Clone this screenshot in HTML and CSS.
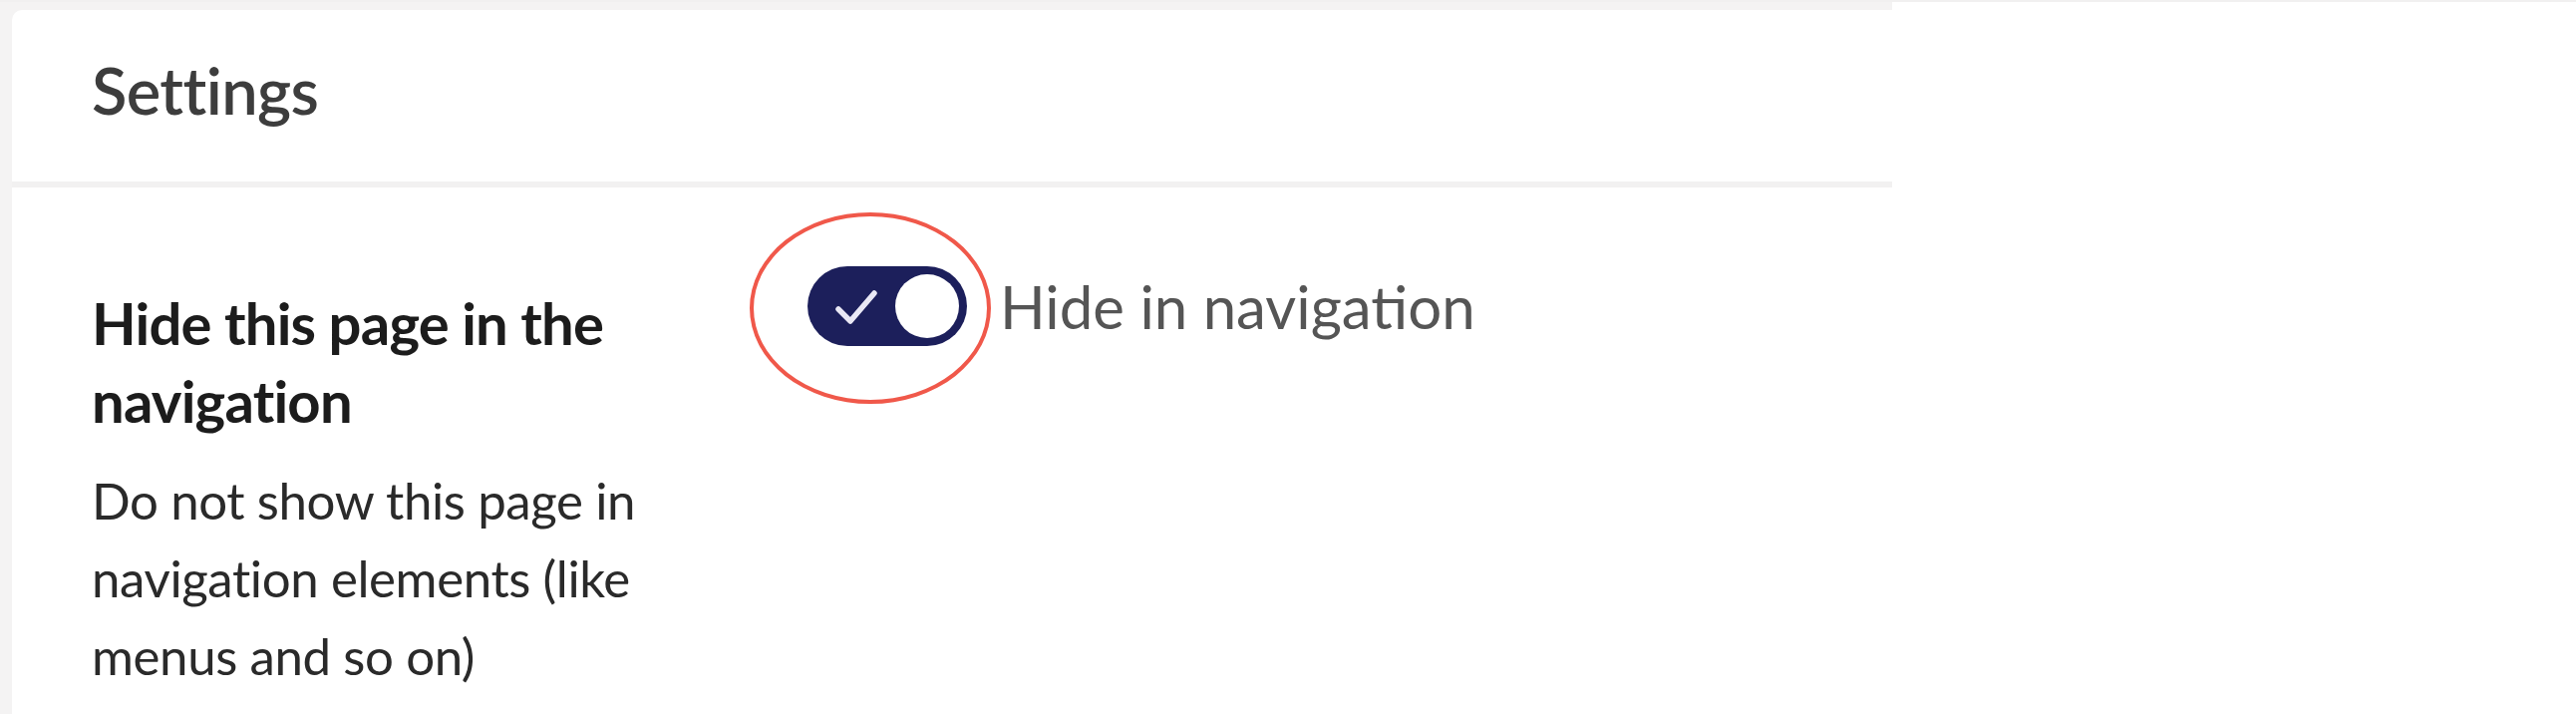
FILE: index.html
```html
<!DOCTYPE html>
<html lang="en">
<head>
<meta charset="utf-8">
<title>Settings</title>
<link rel="stylesheet" href="styles.css">
</head>
<body>
<div class="frame">
  <section class="card">
    <header class="card-header">
      <h2 class="card-title">Settings</h2>
    </header>
    <div class="card-body">
      <div class="field-info">
        <h3 class="field-title">Hide this page in the navigation</h3>
        <p class="field-desc">Do not show this page in navigation elements (like menus and so on)</p>
      </div>
      <div class="field-control">
        <div class="toggle-wrap">
          <span class="annotation"></span>
          <span class="toggle">
            <svg class="toggle-check" viewBox="0 0 44 36" width="44" height="36" aria-hidden="true">
              <path d="M4 20 L16 32 L40 4" fill="none" stroke="#e9e8f5" stroke-width="5.5" stroke-linecap="round" stroke-linejoin="round"/>
            </svg>
            <span class="toggle-knob"></span>
          </span>
        </div>
        <span class="toggle-label">Hide in navigation</span>
      </div>
    </div>
  </section>
</div>
</body>
</html>
```
FILE: styles.css
```css
html, body {
  margin: 0;
  padding: 0;
  background: #ffffff;
}

body {
  font-family: Lato, "Open Sans", "Liberation Sans", sans-serif;
  border-top: 2px solid #f1f0f0;
  height: 714px;
  overflow: hidden;
}

.frame {
  width: 1886px;
  height: 714px;
  background: #f4f3f3;
  padding: 8px 0 0 12px;
}

.card {
  background: #ffffff;
  border-top-left-radius: 10px;
  height: 100%;
}

.card-header {
  height: 178px;
  box-sizing: border-box;
  display: flex;
  align-items: center;
  padding: 0 0 12px 80px;
  border-bottom: 6px solid #f2f1f1;
}

.card-title {
  margin: 0;
  font-size: 65px;
  font-weight: 600;
  color: #3d3d3d;
  line-height: 1;
  letter-spacing: -0.6px;
}

.card-body {
  display: grid;
  grid-template-columns: 600px auto;
  column-gap: 118px;
  padding: 79px 0 0 80px;
  align-items: start;
}

.field-info {
  padding-top: 18px;
}

.field-title {
  margin: 0;
  font-size: 58px;
  line-height: 78px;
  font-weight: 700;
  color: #1c1c1c;
  letter-spacing: -0.8px;
}

.field-desc {
  margin: 22px 0 0;
  font-size: 51px;
  line-height: 78px;
  font-weight: 400;
  color: #2a2a2a;
  letter-spacing: -0.4px;
}

.field-control {
  display: flex;
  align-items: center;
}

.toggle-wrap {
  position: relative;
  width: 160px;
  height: 80px;
}

.annotation {
  position: absolute;
  left: -58px;
  top: -54px;
  width: 234px;
  height: 184px;
  border: 4px solid #f0584a;
  border-radius: 50%;
}

.toggle {
  display: flex;
  align-items: center;
  justify-content: space-between;
  width: 160px;
  height: 80px;
  box-sizing: border-box;
  padding: 0 8px 0 27px;
  border-radius: 40px;
  background: #1c1f5b;
}

.toggle-check {
  display: block;
  margin-top: 2px;
}

.toggle-knob {
  width: 64px;
  height: 64px;
  border-radius: 50%;
  background: #ffffff;
}

.toggle-label {
  margin-left: 33px;
  font-size: 60px;
  line-height: 80px;
  color: #555555;
}
```
